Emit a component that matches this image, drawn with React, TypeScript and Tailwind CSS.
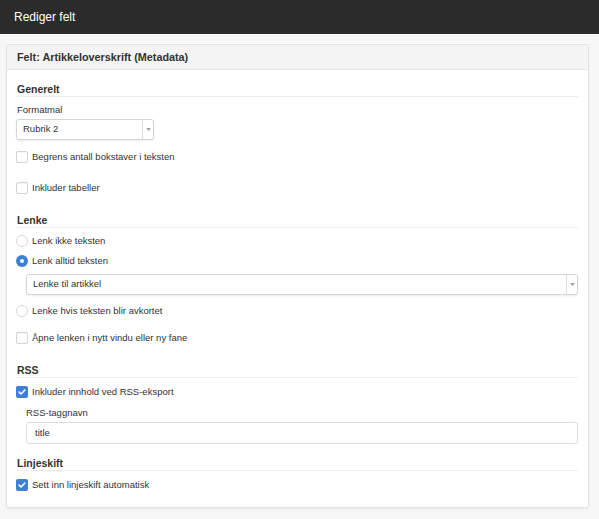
import React from 'react';

function Box({ checked }: { checked?: boolean }) {
  if (checked) {
    return (
      <span className="flex h-[12px] w-[12px] shrink-0 items-center justify-center rounded-[2px] bg-[#3d80d6]">
        <svg viewBox="0 0 12 12" className="h-[10px] w-[10px]" fill="none">
          <path d="M2.6 6.2 4.9 8.4 9.4 3.6" stroke="#fff" strokeWidth="1.9" strokeLinecap="round" strokeLinejoin="round" />
        </svg>
      </span>
    );
  }
  return <span className="h-[12px] w-[12px] shrink-0 rounded-[2px] border border-[#d4d4d4] bg-white shadow-[inset_0_1px_1px_rgba(0,0,0,0.04)]" />;
}

function Radio({ checked }: { checked?: boolean }) {
  if (checked) {
    return (
      <span className="flex h-[12px] w-[12px] shrink-0 items-center justify-center rounded-full bg-[#3d80d6]">
        <span className="h-[4px] w-[4px] rounded-full bg-white" />
      </span>
    );
  }
  return <span className="h-[12px] w-[12px] shrink-0 rounded-full border border-[#d8d8d8] bg-white" />;
}

function Row({ children, label, className }: { children: React.ReactNode; label: string; className: string }) {
  return (
    <div className={`flex h-[14px] items-center gap-[4px] ${className}`}>
      {children}
      <span className="leading-[14px]">{label}</span>
    </div>
  );
}

function Heading({ title, className }: { title: string; className: string }) {
  return (
    <div className={`h-[15px] border-b border-[#eeeeee] text-[10.5px] font-bold leading-[14px] text-[#333] ${className}`}>
      {title}
    </div>
  );
}

function Select({ value, className }: { value: string; className: string }) {
  return (
    <div className={`flex h-[21px] items-stretch rounded-[3px] border border-[#d6d6d6] bg-white shadow-[0_1px_2px_rgba(0,0,0,0.08)] ${className}`}>
      <div className="flex flex-1 items-center pl-[6px]">{value}</div>
      <div className="flex w-[11px] items-center justify-center border-l border-[#dcdcdc]">
        <svg viewBox="0 0 6 4" className="h-[3px] w-[5px]">
          <path d="M0 0h6L3 4z" fill="#9a9a9a" />
        </svg>
      </div>
    </div>
  );
}

export default function App() {
  return (
    <div className="min-h-[519px] bg-[#f7f7f7] font-['Liberation_Sans',Arial,sans-serif] text-[9.5px] text-[#333]">
      <div className="flex h-[35px] items-center border-b border-white bg-[#2b2b2b] pl-[14px] text-[12px] text-white">
        Rediger felt
      </div>

      <div className="ml-[6px] mr-[10px] mt-[9px] rounded-[3px] border border-[#e2e2e2] bg-white shadow-[0_1px_2px_rgba(0,0,0,0.06)]">
        <div className="flex h-[25px] items-center border-b border-[#e6e6e6] bg-[#f4f4f4] pl-[10px] text-[10.8px] font-bold text-[#333]">
          Felt: Artikkeloverskrift (Metadata)
        </div>

        <div className="px-[10px] pb-[15px] pt-[12px]">
          <Heading title="Generelt" className="" />
          <div className="mt-[7px] leading-[12px]">Formatmal</div>
          <Select value="Rubrik 2" className="ml-[-1px] mt-[3px] w-[138px]" />
          <Row label="Begrens antall bokstaver i teksten" className="ml-[-1px] mt-[10px]">
            <Box />
          </Row>
          <Row label="Inkluder tabeller" className="ml-[-1px] mt-[17px]">
            <Box />
          </Row>

          <Heading title="Lenke" className="mt-[18px]" />
          <Row label="Lenk ikke teksten" className="ml-[-1px] mt-[6px]">
            <Radio />
          </Row>
          <Row label="Lenk alltid teksten" className="ml-[-1px] mt-[6px]">
            <Radio checked />
          </Row>
          <Select value="Lenke til artikkel" className="ml-[9px] mt-[6px]" />
          <Row label="Lenke hvis teksten blir avkortet" className="ml-[-1px] mt-[9px]">
            <Radio />
          </Row>
          <Row label="Åpne lenken i nytt vindu eller ny fane" className="ml-[-1px] mt-[13px]">
            <Box />
          </Row>

          <Heading title="RSS" className="mt-[18px]" />
          <Row label="Inkluder innhold ved RSS-eksport" className="ml-[-1px] mt-[7px]">
            <Box checked />
          </Row>
          <div className="ml-[9px] mt-[8px] leading-[12px]">RSS-taggnavn</div>
          <div className="ml-[9px] mt-[3px] flex h-[22px] items-center rounded-[3px] border border-[#dddddd] bg-white pl-[8px]">
            title
          </div>

          <Heading title="Linjeskift" className="mt-[12px]" />
          <Row label="Sett inn linjeskift automatisk" className="ml-[-1px] mt-[7px]">
            <Box checked />
          </Row>
        </div>
      </div>
    </div>
  );
}
